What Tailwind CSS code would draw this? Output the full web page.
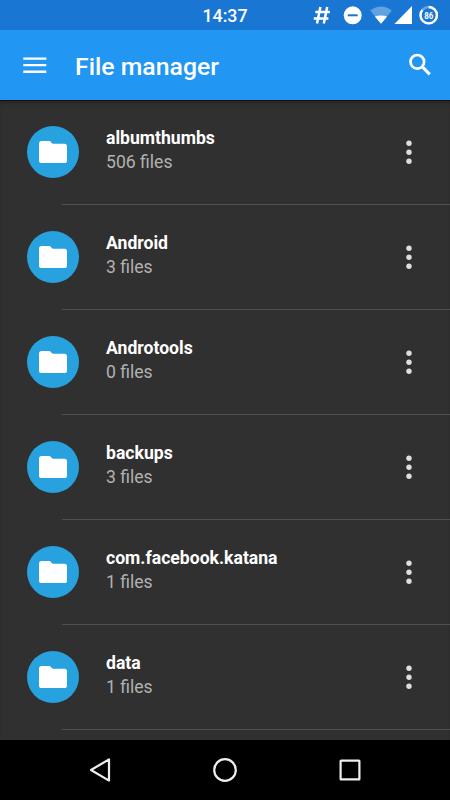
<!DOCTYPE html>
<html lang="en">
<head>
<meta charset="utf-8">
<title>File manager</title>
<script src="https://cdn.jsdelivr.net/npm/@tailwindcss/browser@4"></script>
</head>
<body class="bg-[#303030]">
<div class="flex h-[800px] w-[450px] flex-col overflow-hidden bg-[#303030] font-[Roboto,sans-serif] text-white">
  <div class="relative flex h-[30px] shrink-0 items-center justify-center bg-[#1976d2]">
    <span class="pt-0.5 text-[17.8px] leading-[30px] font-medium">14:37</span>
    <svg class="absolute top-0 right-0" width="140" height="30" viewBox="310 0 140 30" fill="none">
      <path d="M320.4 7l-3.4 16.5M327.2 7l-3.4 16.5M315.3 12h14.6M313.8 18.4h14.6" stroke="#fff" stroke-width="2.5"/>
      <circle cx="352.7" cy="15.3" r="9" fill="#fff"/>
      <path d="M347.7 15.3h10" stroke="#1976d2" stroke-width="2"/>
      <path d="M370.2 10.6Q381 2.4 391.8 10.6L381 23.8z" fill="#fff" fill-opacity=".32"/>
      <path d="M374.8 16.4Q381 14.4 387.2 16.4L381 23.8z" fill="#fff"/>
      <path d="M412 6v18h-17.6z" fill="#fff"/>
      <circle cx="428.7" cy="15.2" r="8.2" stroke="#fff" stroke-opacity=".35" stroke-width="2.4"/>
      <circle cx="428.7" cy="15.2" r="8.2" stroke="#fff" stroke-width="2.4" pathLength="100" stroke-dasharray="86 14" transform="rotate(-90 428.7 15.2)"/>
      <text x="428.7" y="18.5" text-anchor="middle" font-size="9" font-weight="700" fill="#fff" textLength="9" lengthAdjust="spacingAndGlyphs">86</text>
    </svg>
  </div>
  <header class="flex h-[70px] shrink-0 items-center bg-[#2196f3] pl-[23px] pr-[16px]">
    <svg width="24" height="18" viewBox="0 0 24 18"><path d="M.3 2.6h23M.3 9.1h23M.3 15.7h23" stroke="#fff" stroke-width="2.4"/></svg>
    <h1 class="ml-7 flex-1 pt-1 text-[24.8px] leading-[30px] font-medium">File manager</h1>
    <svg width="26" height="26" viewBox="407 52 26 26" fill="none" stroke="#fff" stroke-width="2.7"><circle cx="416.3" cy="61.8" r="6.8"/><path d="M421.1 66.6l7.7 7.7" stroke-width="3.1"/></svg>
  </header>
  <main id="files" class="h-[640px] shrink-0 overflow-hidden shadow-[inset_0_1px_0_#190c08,inset_0_5px_5px_-3px_#222]"></main>
  <nav class="flex h-[60px] shrink-0 items-center justify-center bg-black">
    <svg width="280" height="30" viewBox="85 755 280 30" fill="none" stroke="#eee" stroke-width="2.2" stroke-linejoin="round">
      <path d="M109 759.4v21.2L91 770z"/>
      <circle cx="225" cy="770" r="10.8"/>
      <rect x="340.6" y="760.6" width="18.8" height="18.8" rx=".5"/>
    </svg>
  </nav>
</div>
<script>
const files = [["albumthumbs", 506], ["Android", 3], ["Androtools", 0], ["backups", 3], ["com.facebook.katana", 1], ["data", 1]];
document.getElementById("files").innerHTML = files.map(([name, count]) => `
  <div class="flex h-[105px] flex-col">
    <div class="flex flex-1 items-center pl-[27px] pr-[38px]">
      <div class="flex size-[52px] shrink-0 items-center justify-center rounded-full bg-[#27a2df]">
        <svg width="28" height="22" viewBox="0 0 28 22"><path d="M2.6 0h8.2l2.8 2.7h11.8a2.6 2.6 0 0 1 2.6 2.6v14.1a2.6 2.6 0 0 1-2.6 2.6H2.6A2.6 2.6 0 0 1 0 19.4V2.6A2.6 2.6 0 0 1 2.6 0z" fill="#fff"/></svg>
      </div>
      <div class="ml-[27px] flex-1 -mt-[5px]">
        <div class="text-[17.6px] leading-6 font-bold">${name}</div>
        <div class="text-[17.6px] leading-6 text-[#b2b2b2]">${count} files</div>
      </div>
      <svg width="6" height="24" viewBox="0 0 6 24" fill="#dedede"><circle cx="3" cy="3.2" r="2.7"/><circle cx="3" cy="12.2" r="2.7"/><circle cx="3" cy="21.2" r="2.7"/></svg>
    </div>
    <div class="ml-[62px] h-px bg-[#505050]"></div>
  </div>`).join("");
</script>
</body>
</html>
